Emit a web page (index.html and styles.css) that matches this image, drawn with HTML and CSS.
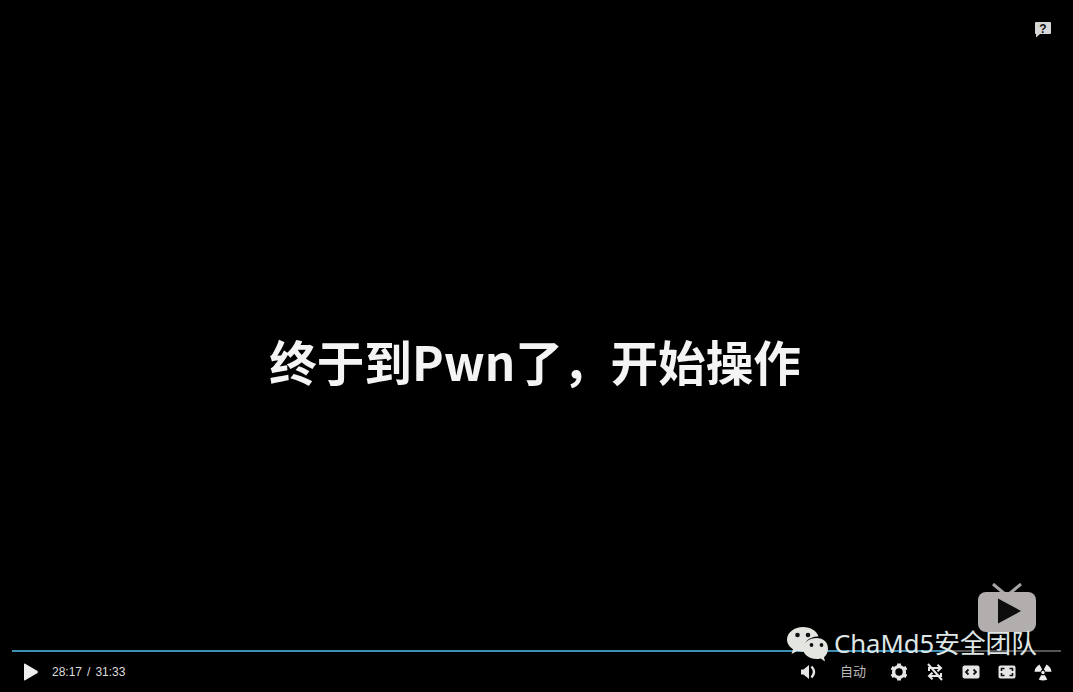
FILE: index.html
```html
<!doctype html>
<html lang="zh-CN">
<head>
<title>ChaMd5 video</title>
<meta name="viewport" content="width=device-width, initial-scale=1">
<link rel="stylesheet" href="styles.css">
</head>
<body>
<div class="player">
	<div class="top">
		<svg class="help" width="18" height="17" viewBox="0 0 18 17" aria-label="help">
			<path fill="#d6d6d6" d="M2 1h14a1 1 0 0 1 1 1v10a1 1 0 0 1-1 1H6l-4 3.500V13H2a1 1 0 0 1-1-1V2a1 1 0 0 1 1-1z"/>
			<text x="9" y="11.500" text-anchor="middle" class="helpmark">?</text>
		</svg>
	</div>
	<div class="stage">
		<div class="caption">终于到Pwn了，开始操作</div>
	</div>
	<div class="progress"><div class="played" style="width:89.4%"></div></div>
	<div class="controls">
		<svg class="play" width="16" height="18" viewBox="0 0 16 18"><path fill="#eee" d="M1 1.500q0-1.300 1.200-.7l12.300 7.300q.9.900 0 1.800L2.200 17.200q-1.200.6-1.200-.7z"/></svg>
		<div class="time"><span>28:17</span><span>/</span><span>31:33</span></div>
		<div class="right">
			<svg class="ico" width="18" height="18" viewBox="0 0 18 18">
				<path fill="#e6e6e6" d="M1 6.500h2.500L9 2v14l-5.500-4.500H1z"/>
				<path fill="none" stroke="#e6e6e6" stroke-width="2.400" d="M11.500 3.500q5 5.500 0 11"/>
			</svg>
			<div class="quality">自动</div>
			<svg class="ico" width="18" height="18" viewBox="0 0 18 18">
				<circle cx="9" cy="9" r="5.400" fill="none" stroke="#e6e6e6" stroke-width="3.400"/>
				<g stroke="#e6e6e6" stroke-width="3.800">
					<path d="M9 .5v3M9 14.500v3M1.600 4.700l2.600 1.500M13.800 11.800l2.600 1.500M1.600 13.300l2.600-1.500M13.800 6.200l2.600-1.500"/>
				</g>
			</svg>
			<svg class="ico" width="18" height="18" viewBox="0 0 18 18" fill="none" stroke="#e6e6e6" stroke-width="2">
				<path d="M3 8V5h11M11.500 1.800 15 5l-3.500 3.200"/>
				<path d="M15 10v3H4M6.500 9.800 3 13l3.500 3.200"/>
				<path d="M2 1l14 16"/>
			</svg>
			<svg class="ico" width="18" height="18" viewBox="0 0 18 18">
				<rect x="0.500" y="2.500" width="17" height="13" rx="2" fill="#e6e6e6"/>
				<path fill="none" stroke="#111" stroke-width="1.800" d="M6.500 6.500 4 9l2.500 2.500M11.500 6.500 14 9l-2.500 2.500"/>
			</svg>
			<svg class="ico" width="18" height="18" viewBox="0 0 18 18">
				<rect x="0.500" y="2.500" width="17" height="13" rx="2" fill="#e6e6e6"/>
				<path fill="none" stroke="#111" stroke-width="1.600" d="M3.500 8V5.500H6.500M11.500 5.500h3V8M14.500 10v2.500h-3M6.500 12.500h-3V10"/>
			</svg>
			<svg class="ico" width="18" height="18" viewBox="0 0 18 18">
				<path fill="#ececec" d="M5.500 1.500 8.200 6.600Q7 7.300 6.500 8.700H.5Q1 4 5.500 1.500zM12.500 1.500 9.800 6.600Q11 7.300 11.500 8.700H17.500Q17 4 12.500 1.500z"/>
				<circle cx="9" cy="9.500" r="1.700" fill="#ececec"/>
				<path fill="#ececec" d="M7.300 12 4.700 16.500Q9 18.500 13.300 16.500L10.700 12Q9 12.700 7.300 12z"/>
			</svg>
		</div>
	</div>
	<div class="mark">
		<svg class="tv" width="58" height="50" viewBox="0 0 58 50">
			<path fill="none" stroke="#a9a5a5" stroke-width="3" d="M15 1l12 10M43 1 31 11"/>
			<rect y="9" width="58" height="40" rx="8" fill="#b2aeae"/>
			<path fill="#0d0d0d" d="M20 15.500 43 28 20 40.500z"/>
		</svg>
		<div class="account">
			<svg class="wechat" width="41" height="35" viewBox="0 0 41 35">
				<path fill="#e4e4e0" d="M16 0C7.500 0 0 5.500 0 12.500c0 4 2.500 7.400 6 9.700L4.500 27l5.800-3.100c1.800.5 3.700.8 5.700.8h1.500C17 23 17 22 17 21c0-6.500 6-11.500 13.500-11.500h1C30 4 23.500 0 16 0z"/>
				<path fill="#e4e4e0" d="M29.500 11C22.500 11 16 15.300 16 21.500S22.500 32 29.500 32c1.500 0 3-.2 4.300-.6L38 34.500l-1-4.300c2.500-2 4-5 4-8.700C41 15.300 36.500 11 29.500 11z"/>
				<circle cx="10.500" cy="8" r="2.300" fill="#111"/>
				<circle cx="21" cy="8" r="2.300" fill="#111"/>
				<circle cx="24.500" cy="18" r="1.900" fill="#111"/>
				<circle cx="34.500" cy="18" r="1.900" fill="#111"/>
			</svg>
			<span class="name">ChaMd5安全团队</span>
		</div>
	</div>
</div>
</body>
</html>
```

FILE: styles.css
```css
* { box-sizing:border-box; margin:0; }
html, body { height:100%; background:#000; overflow:hidden; }
body { font-family:'Noto Sans', 'Noto Sans CJK SC', sans-serif; color:#ddd; }
.player { position:relative; height:692px; display:flex; flex-direction:column; }
.top { height:40px; padding:21px 21px 0 0; display:flex; justify-content:flex-end; }
.helpmark { font:bold 12px 'Liberation Sans', sans-serif; fill:#111; }
.stage { flex:1; display:flex; align-items:center; justify-content:center; padding:31px 3px 0 0; }
.caption { font:700 47.6px/1.2 'Noto Sans CJK SC', 'Noto Sans', sans-serif; color:#f4f4f4; white-space:nowrap; filter:blur(.5px); }
.progress { height:2px; margin:0 12px; background:#555; }
.played { height:100%; background:#3f8fb5; }
.controls { height:40px; padding:0 21px 0 23px; display:flex; align-items:center; }
.time { margin-left:13px; display:flex; column-gap:5px; font:12px 'Liberation Sans', sans-serif; color:#ddd; }
.right { margin-left:auto; display:flex; align-items:center; column-gap:18px; }
.quality { width:30px; margin:0 4px 0 2px; padding-bottom:3px; font:13px/16px 'Noto Sans CJK SC', sans-serif; color:#bbb; text-align:center; }
.mark { position:absolute; right:37px; top:583px; display:flex; flex-direction:column; align-items:flex-end; }
.tv { display:block; }
.account { position:absolute; top:43px; right:-1px; display:flex; align-items:center; column-gap:6px; white-space:nowrap; }
.name { font:25.700px/36px 'Noto Sans', 'Noto Sans CJK SC', sans-serif; color:#dfe6e6; }
```
